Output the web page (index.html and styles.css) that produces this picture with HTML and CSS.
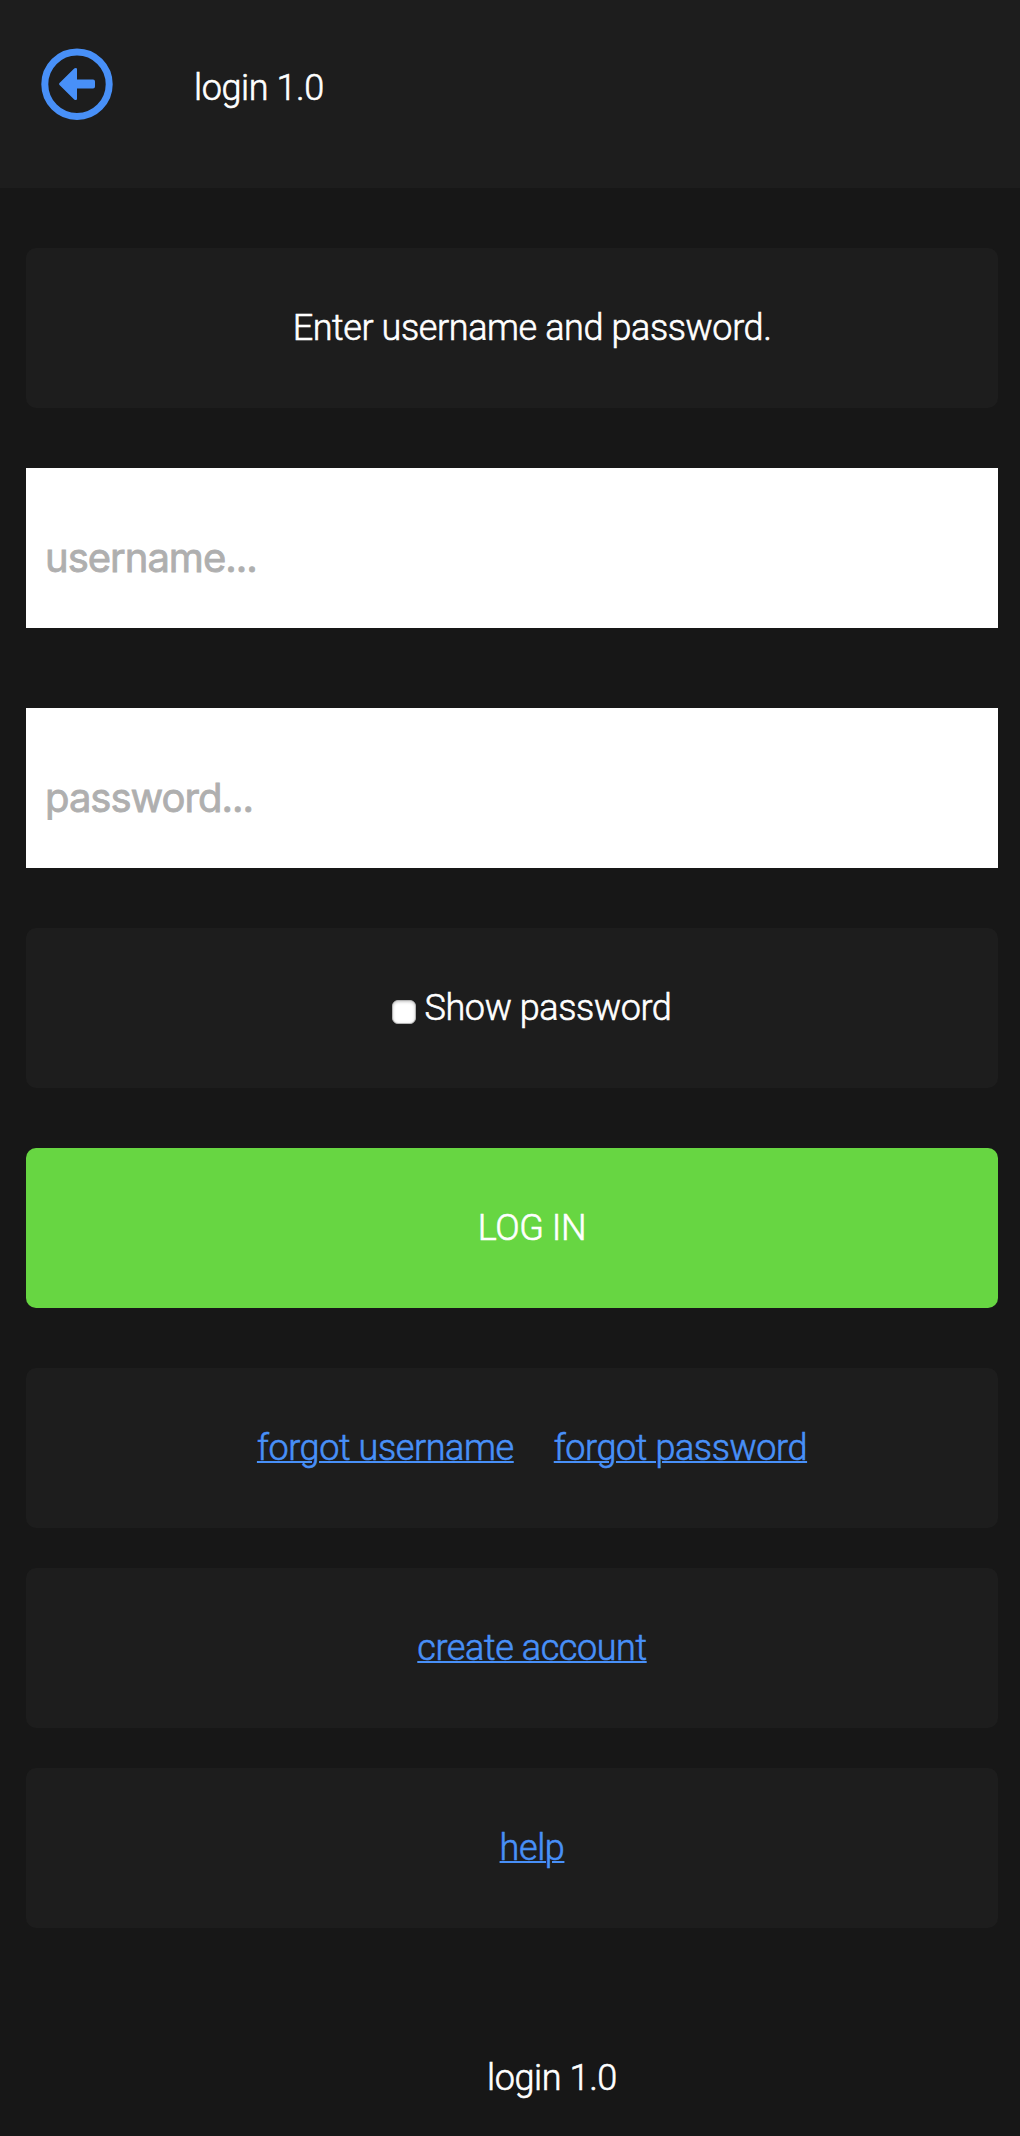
FILE: index.html
```html
<!DOCTYPE html>
<html lang="en">
<head>
<meta charset="utf-8">
<title>login 1.0</title>
<link rel="stylesheet" href="styles.css">
</head>
<body>
<header class="header">
  <a class="back" href="#" aria-label="Back">
    <svg class="back-icon" viewBox="0 0 72 72" width="72" height="72">
      <circle cx="36" cy="36.300" r="32.2" fill="none" stroke="currentColor" stroke-width="7"/>
      <path d="M18.5 34.9 L33.2 20.6 Q34.6 19.6 36 20.5 V31.5 H52 Q54 31.5 54 33.5 V38.5 Q54 40.500 52 40.500 H36 V51.500 Q34.600 52.400 33.200 51.400 L18.500 37.100 Q17.500 36 18.500 34.900 Z" fill="currentColor"/>
    </svg>
  </a>
  <h1 class="title">login 1.0</h1>
</header>
<main class="main">
  <p class="card">Enter username and password.</p>
  <input class="field field-user" type="text" placeholder="username...">
  <input class="field" type="password" placeholder="password...">
  <label class="card"><input class="check" type="checkbox">Show password</label>
  <button class="card login" type="button">LOG IN</button>
  <nav class="links">
    <div class="card pair"><a href="#">forgot username</a><a href="#">forgot password</a></div>
    <div class="card"><a href="#">create account</a></div>
    <div class="card"><a href="#">help</a></div>
  </nav>
</main>
<footer class="footer">login 1.0</footer>
</body>
</html>
```
FILE: styles.css
```css
* {
  box-sizing: border-box;
}

body {
  margin: 0;
  min-height: 2136px;
  background: #171717;
  color: #fff;
  font: 300 36px/42px Roboto, sans-serif;
  letter-spacing: -0.4px;
  -webkit-text-stroke: 0.6px currentColor;
}

a {
  color: #4890f8;
  text-decoration-thickness: 1.5px;
}

.header {
  display: flex;
  align-items: flex-start;
  height: 188px;
  padding: 48px 41px 0;
  background: #1d1d1d;
}

.back,
.back-icon {
  display: block;
}

.title {
  margin: 19px 0 0 81px;
  font: inherit;
}

.main {
  display: flex;
  flex-direction: column;
  gap: 60px;
  padding: 60px 22px 0 26px;
}

.card {
  display: flex;
  justify-content: center;
  width: 100%;
  height: 160px;
  margin: 0;
  padding: 59px 0 0 40px;
  border-radius: 10px;
  background: #1d1d1d;
}

.field {
  display: block;
  width: 100%;
  height: 160px;
  padding: 18px 19px 0;
  border: 0;
  border-radius: 0;
  background: #fff;
  color: #171717;
  font: 400 40px/48px Inter, sans-serif;
  letter-spacing: -1px;
  -webkit-text-stroke: 0.8px #afafaf;
}

.field-user {
  margin-bottom: 20px;
}

.field::placeholder {
  color: #afafaf;
  opacity: 1;
}

.check {
  appearance: none;
  width: 24px;
  height: 24px;
  margin: 13px 9px 0 -1px;
  border: 1px solid #b4b4b4;
  border-radius: 6px;
  background: #fff;
  box-shadow: inset 0 1px 3px #c8c8c8;
}

.login {
  align-items: flex-start;
  border: 0;
  background: #67d642;
  color: inherit;
  font: inherit;
  letter-spacing: inherit;
}

.links {
  display: flex;
  flex-direction: column;
  gap: 40px;
}

.pair {
  gap: 40px;
}

.footer {
  padding: 129px 0 0 84px;
  text-align: center;
}
```
